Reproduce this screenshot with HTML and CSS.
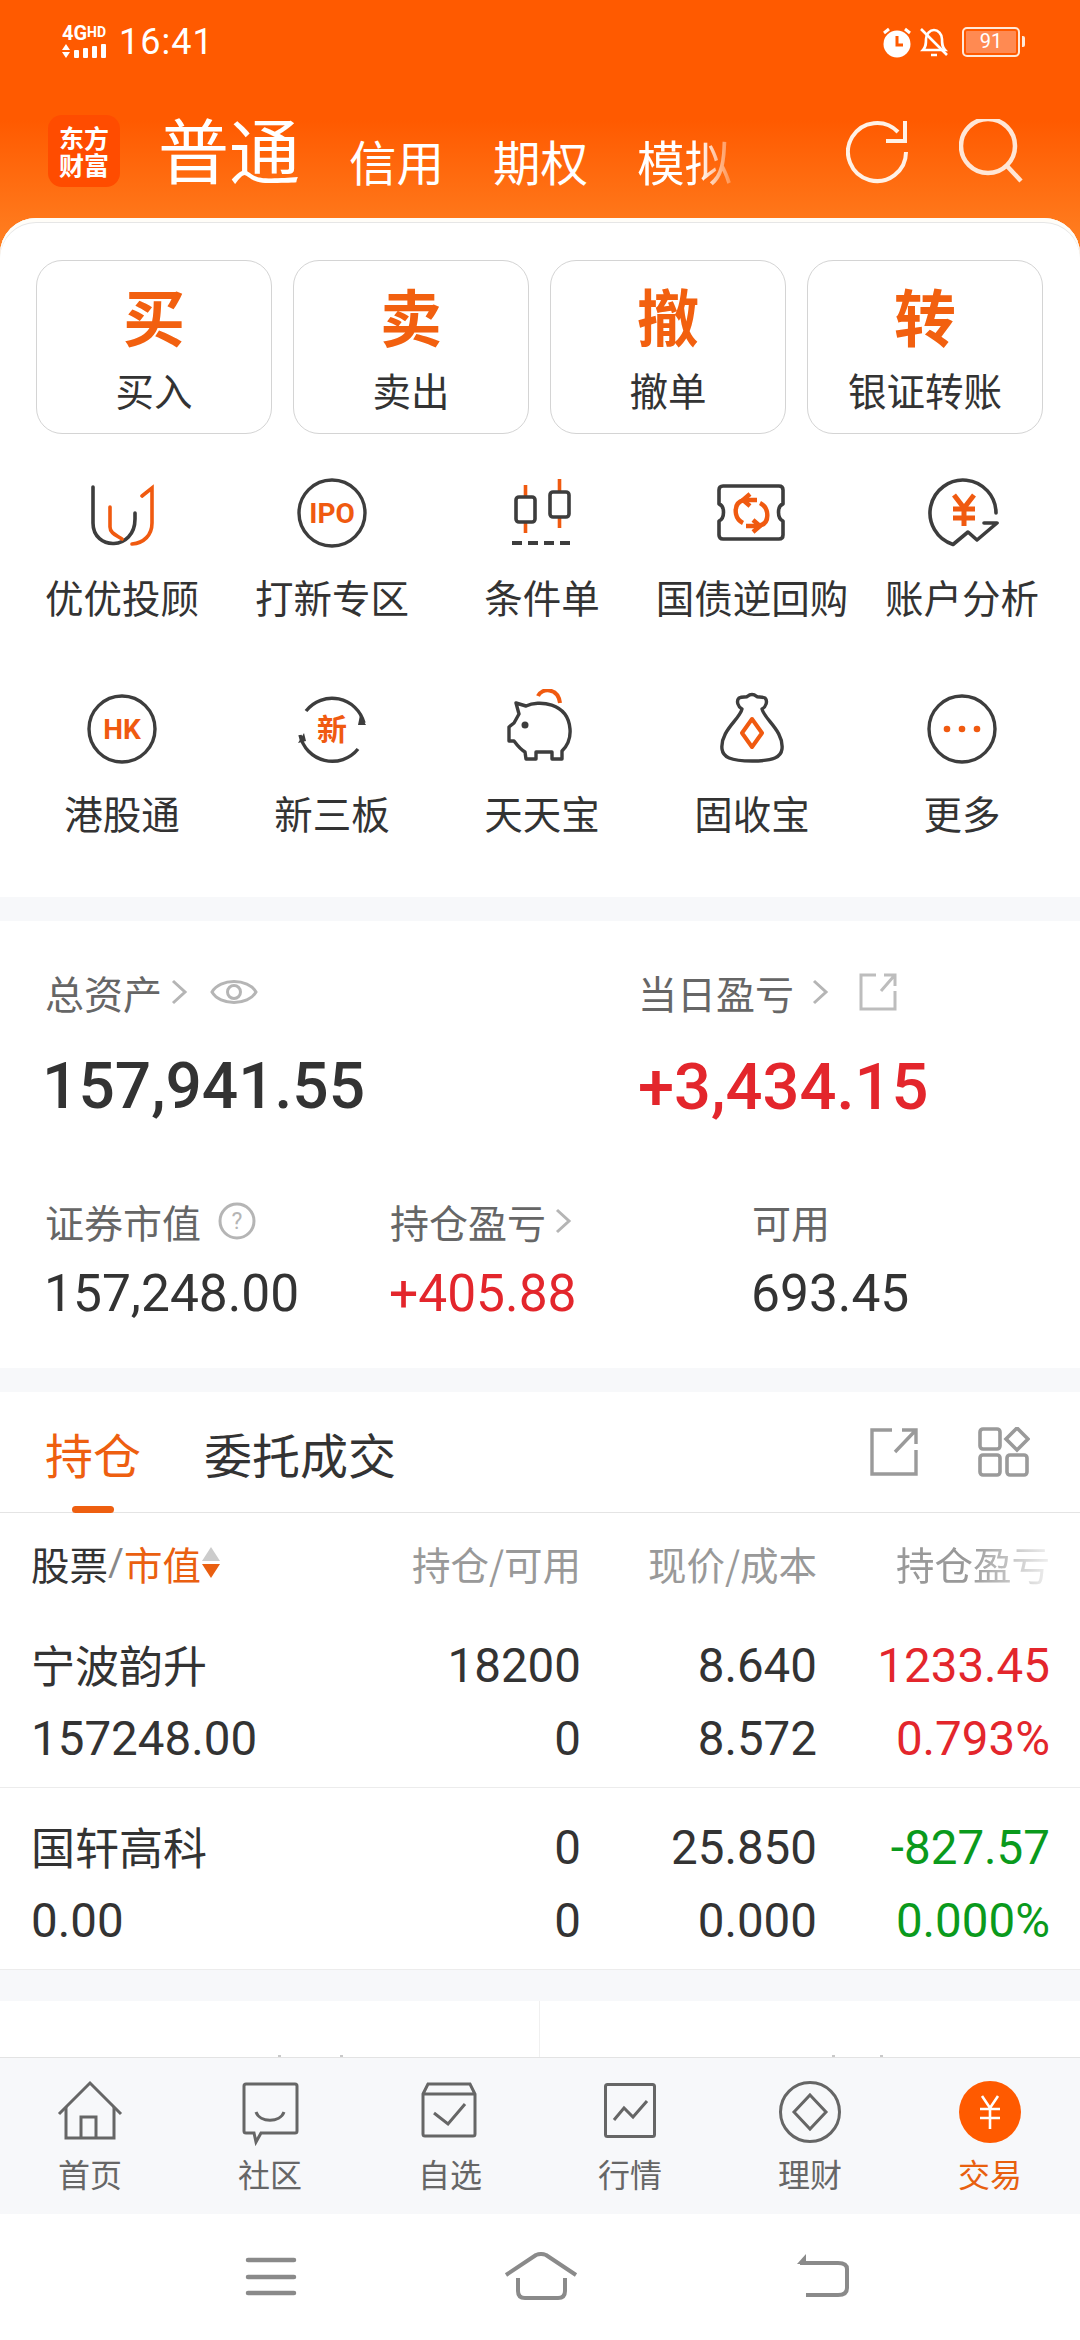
FILE: index.html
```html
<!DOCTYPE html>
<html lang="zh">
<head>
<meta charset="utf-8">
<title>交易</title>
<link rel="stylesheet" href="styles.css">
</head>
<body>
<div class="phone">
  <header class="head">
    <div class="status">
      <div class="status-left">
        <div class="net">
          <span class="net-text">4G<small>HD</small></span>
          <svg class="net-bars" width="48" height="16" viewBox="0 0 48 16"><path fill="#fff" d="M0 7 4 1l4 6zM0 9h8l-4 6zM12 8a1 1 0 0 1 1-1h3a1 1 0 0 1 1 1v6a1 1 0 0 1-1 1h-3a1 1 0 0 1-1-1zM21 6a1 1 0 0 1 1-1h3a1 1 0 0 1 1 1v8a1 1 0 0 1-1 1h-3a1 1 0 0 1-1-1zM30 4a1 1 0 0 1 1-1h3a1 1 0 0 1 1 1v10a1 1 0 0 1-1 1h-3a1 1 0 0 1-1-1zM39 2a1 1 0 0 1 1-1h3a1 1 0 0 1 1 1v12a1 1 0 0 1-1 1h-3a1 1 0 0 1-1-1z"/></svg>
        </div>
        <span class="time">16:41</span>
      </div>
      <div class="status-right">
        <svg width="30" height="32" viewBox="0 0 30 32"><circle cx="15" cy="18" r="13.5" fill="#fff"/><path d="M15 10v9h6" fill="none" stroke="#ff5a00" stroke-width="3"/><path d="M2 7l5-4M28 7l-5-4" stroke="#fff" stroke-width="3"/></svg>
        <svg width="28" height="32" viewBox="0 0 28 32"><path d="M3 24c3-3 3-6 3-11 0-5 4-9 8-9s8 4 8 9c0 5 0 8 3 11z" fill="none" stroke="#fff" stroke-width="2.6"/><path d="M11 29h6M1 3l26 26" stroke="#fff" stroke-width="2.6" fill="none"/></svg>
        <div class="battery"><div class="battery-fill"><span>91</span></div></div>
      </div>
    </div>
    <div class="headbar">
      <div class="logo"><span class="logo-text">东方财富</span></div>
      <nav class="acct-tabs">
        <span class="acct-main">普通</span>
        <span class="acct-sub">信用</span>
        <span class="acct-sub">期权</span>
        <span class="acct-sub acct-fade">模拟</span>
      </nav>
      <div class="head-actions">
        <svg width="66" height="66" viewBox="0 0 66 66" fill="none" stroke="#fff1e6" stroke-width="4"><path d="M60 33A29 29 0 1 1 52 13"/><path d="M59 2V22H40"/></svg>
        <svg width="66" height="66" viewBox="0 0 66 66" fill="none" stroke="#ffe6d6" stroke-width="4.5"><circle cx="29" cy="27" r="27"/><path d="M48 47 62 62"/></svg>
      </div>
    </div>
  </header>

  <section class="sheet">
    <div class="trade-btns">
      <div class="trade-btn"><b>买</b><span>买入</span></div>
      <div class="trade-btn"><b>卖</b><span>卖出</span></div>
      <div class="trade-btn"><b>撤</b><span>撤单</span></div>
      <div class="trade-btn"><b>转</b><span>银证转账</span></div>
    </div>
    <div class="tools">
      <div class="tool">
        <svg class="ico" viewBox="0 0 80 80" fill="none" stroke-width="3.6" stroke-linecap="round"><path stroke="#3d3d3d" d="M11 14V50C11 78 53 78 53 46V40"/><path stroke="#f05a10" d="M28 34V54C28 60 34 62 40 66M50 71C62 70 70 62 70 50V15L60 23"/></svg>
        <span>优优投顾</span>
      </div>
      <div class="tool">
        <svg class="ico" viewBox="0 0 80 80" fill="none"><circle cx="40" cy="40" r="33" stroke="#3d3d3d" stroke-width="3.4"/><text x="40" y="50" class="ico-text" font-size="28">IPO</text></svg>
        <span>打新专区</span>
      </div>
      <div class="tool">
        <svg class="ico" viewBox="0 0 80 80" fill="none" stroke-width="3.6"><path stroke="#f05a10" d="M23.500 12V24M23.500 49V60M57.500 6V19M57.500 44V55"/><rect x="14" y="24" width="19" height="25" rx="3" stroke="#3d3d3d"/><rect x="48" y="19" width="19" height="25" rx="3" stroke="#3d3d3d"/><path stroke="#3d3d3d" stroke-width="4" stroke-dasharray="10 6" d="M10 70H74"/></svg>
        <span>条件单</span>
      </div>
      <div class="tool">
        <svg class="ico" viewBox="0 0 80 80" fill="none" stroke-width="3.6"><path stroke="#3d3d3d" stroke-linejoin="round" d="M11 13H67Q71 13 71 17V31C65 33 65 45 71 48V62Q71 66 67 66H11Q7 66 7 62V48C13 45 13 33 7 31V17Q7 13 11 13Z"/><path stroke="#f05a10" stroke-width="4.400" d="M32 27C24 29 23 35 24 41 25 46 27 48 31 50M47 53C55 51 56 45 55 39 54 34 52 32 48 30"/><path stroke="#f05a10" stroke-width="4.400" stroke-linejoin="round" d="M38 21 31 27 38 33M41 59 48 53 41 47"/><path stroke="#f05a10" stroke-width="4.400" d="M32 27H45M47 53H34"/></svg>
        <span>国债逆回购</span>
      </div>
      <div class="tool">
        <svg class="ico" viewBox="0 0 80 80" fill="none" stroke-width="3.6" stroke-linejoin="round"><path stroke="#3d3d3d" stroke-linecap="round" d="M74 40A33 33 0 1 0 31 71.500L46 59 55 67 75 50H62"/><path stroke="#f05a10" stroke-width="5" d="M32 22 42 35 52 22M42 35V53M31 36H53M31 45H53"/></svg>
        <span>账户分析</span>
      </div>
      <div class="tool">
        <svg class="ico" viewBox="0 0 80 80" fill="none"><circle cx="40" cy="40" r="33" stroke="#3d3d3d" stroke-width="3.4"/><text x="40" y="50" class="ico-text" font-size="28">HK</text></svg>
        <span>港股通</span>
      </div>
      <div class="tool">
        <svg class="ico" viewBox="0 0 80 80" fill="none"><path stroke="#3d3d3d" stroke-width="3.4" d="M14 22A33 33 0 0 1 72 34M66 60A33 33 0 0 1 8 46"/><path fill="#3d3d3d" d="M68 26 74 36 66 36zM6 54 12 44 14 52z"/><text x="40" y="51" class="ico-cjk" font-size="30">新</text></svg>
        <span>新三板</span>
      </div>
      <div class="tool">
        <svg class="ico" viewBox="0 0 80 80" fill="none" stroke-linejoin="round"><path stroke="#f05a10" stroke-width="4" d="M36 7C39-1 56-2 58 14"/><path stroke="#3d3d3d" stroke-width="3.4" d="M14 14 24 17C36 11 66 13 68 40 69 52 64 58 60 62V70H50V63H34V70H24L23 63C18 60 15 56 12 52H7V38L12 34 17 25Z"/><circle cx="23" cy="36" r="3.500" fill="#3d3d3d"/></svg>
        <span>天天宝</span>
      </div>
      <div class="tool">
        <svg class="ico" viewBox="0 0 80 80" fill="none" stroke-linejoin="round"><path stroke="#3d3d3d" stroke-width="3.4" d="M30 20C26 18 24 12 27 9 31 7 34 9 36 7 38 5 42 5 44 7 46 9 49 7 53 9 56 12 54 18 50 20 52 30 72 42 70 60 69 68 62 72 40 72 18 72 11 68 10 60 8 42 28 30 30 20Z"/><path stroke="#f05a10" stroke-width="4" d="M40 30 50 44 40 58 30 44Z"/></svg>
        <span>固收宝</span>
      </div>
      <div class="tool">
        <svg class="ico" viewBox="0 0 80 80" fill="none"><circle cx="40" cy="40" r="33" stroke="#3d3d3d" stroke-width="3.4"/><circle cx="25" cy="40" r="3.300" fill="#f05a10"/><circle cx="40" cy="40" r="3.300" fill="#f05a10"/><circle cx="55" cy="40" r="3.300" fill="#f05a10"/></svg>
        <span>更多</span>
      </div>
    </div>
  </section>

  <div class="strip"></div>

  <section class="assets">
    <div class="assets-top">
      <div class="stat">
        <div class="stat-label">总资产
          <svg class="chev" width="18" height="34" viewBox="0 0 18 34" fill="none" stroke="#b5b5b5" stroke-width="3"><path d="M3 6 15 17 3 28"/></svg>
          <svg class="eye" width="48" height="34" viewBox="0 0 48 34" fill="none" stroke="#b5b5b5" stroke-width="3"><path d="M2 17C10 3 38 3 46 17 38 31 10 31 2 17Z"/><circle cx="24" cy="17" r="6.500"/></svg>
        </div>
        <div class="big">157,941.55</div>
      </div>
      <div class="stat">
        <div class="stat-label">当日盈亏
          <svg class="chev gap-chev" width="18" height="34" viewBox="0 0 18 34" fill="none" stroke="#b5b5b5" stroke-width="3"><path d="M3 6 15 17 3 28"/></svg>
          <svg class="share-small" width="38" height="38" viewBox="0 0 38 38" fill="none" stroke="#bdbdbd" stroke-width="3"><path d="M17 2H2V36H36V18M22 18 35 3M25 2H36V13"/></svg>
        </div>
        <div class="big big-gain">+3,434.15</div>
      </div>
    </div>
    <div class="assets-bottom">
      <div class="stat">
        <div class="stat-label">证券市值
          <svg class="help" width="38" height="38" viewBox="0 0 38 38" fill="none"><circle cx="19" cy="19" r="17" stroke="#b5b5b5" stroke-width="3"/><text x="19" y="27" class="help-text" font-size="23">?</text></svg>
        </div>
        <div class="mid">157,248.00</div>
      </div>
      <div class="stat">
        <div class="stat-label">持仓盈亏
          <svg class="chev" width="18" height="34" viewBox="0 0 18 34" fill="none" stroke="#b5b5b5" stroke-width="3"><path d="M3 6 15 17 3 28"/></svg>
        </div>
        <div class="mid red">+405.88</div>
      </div>
      <div class="stat">
        <div class="stat-label">可用</div>
        <div class="mid">693.45</div>
      </div>
    </div>
  </section>

  <div class="strip"></div>

  <section class="holdings">
    <div class="hold-tabs">
      <span class="hold-tab active">持仓</span>
      <span class="hold-tab">委托成交</span>
      <div class="hold-actions">
        <svg width="48" height="48" viewBox="0 0 48 48" fill="none" stroke="#9a9a9a" stroke-width="3.400"><path d="M22 2H2V46H46V22M25 24 45 3M32 2H46V16"/></svg>
        <svg width="52" height="50" viewBox="0 0 52 50" fill="none" stroke="#9a9a9a" stroke-width="3.600"><rect x="2" y="2" width="20" height="20" rx="3"/><rect x="2" y="28" width="20" height="20" rx="3"/><rect x="29" y="28" width="20" height="20" rx="3"/><path d="M39 1 50 12 39 23 28 12Z"/></svg>
      </div>
    </div>
    <div class="table-head">
      <div class="th-name">股票<i>/</i><em>市值</em><span class="sort"><u class="up"></u><u class="down"></u></span></div>
      <div class="th">持仓/可用</div>
      <div class="th">现价/成本</div>
      <div class="th th-fade">持仓盈亏</div>
    </div>
    <div class="hrow hrow-first">
      <div class="cell-name">宁波韵升</div><div class="num">18200</div><div class="num">8.640</div><div class="num red">1233.45</div>
      <div class="num-left">157248.00</div><div class="num">0</div><div class="num">8.572</div><div class="num red">0.793%</div>
    </div>
    <div class="hrow hrow-last">
      <div class="cell-name">国轩高科</div><div class="num">0</div><div class="num">25.850</div><div class="num green">-827.57</div>
      <div class="num-left">0.00</div><div class="num">0</div><div class="num">0.000</div><div class="num green">0.000%</div>
    </div>
  </section>

  <div class="strip strip-last"></div>

  <section class="promo">
    <div class="promo-cell"><s class="tick t1"></s><s class="tick t2"></s></div>
    <div class="promo-cell promo-right"><s class="tick t3"></s><s class="tick t4"></s></div>
  </section>

  <nav class="tabbar">
    <div class="tab-item">
      <svg class="tab-ico" viewBox="0 0 80 80" fill="none" stroke="#666" stroke-width="3"><path d="M9 42 40 11 71 42"/><path d="M16 35V66H64V35M31 66V45H46V66"/></svg>
      <span>首页</span>
    </div>
    <div class="tab-item">
      <svg class="tab-ico" viewBox="0 0 80 80" fill="none" stroke="#666" stroke-width="3"><path d="M16 12H65Q67 12 67 14V59Q67 61 65 61H31L26 70 24 61H16Q14 61 14 59V14Q14 12 16 12Z"/><path d="M26 40C30 51 50 51 54 40"/></svg>
      <span>社区</span>
    </div>
    <div class="tab-item">
      <svg class="tab-ico" viewBox="0 0 80 80" fill="none" stroke="#666" stroke-width="3"><path d="M13 22 18 12H60L65 22V62Q65 64 63 64H15Q13 64 13 62ZM13 22H65"/><path d="M24 41 38 52 55 32"/></svg>
      <span>自选</span>
    </div>
    <div class="tab-item">
      <svg class="tab-ico" viewBox="0 0 80 80" fill="none" stroke="#666" stroke-width="3"><rect x="15.500" y="12.500" width="49" height="52" rx="2"/><path d="M24 48 34 36 43 45 57 29"/></svg>
      <span>行情</span>
    </div>
    <div class="tab-item">
      <svg class="tab-ico" viewBox="0 0 80 80" fill="none" stroke="#666" stroke-width="3"><circle cx="40" cy="40" r="29.500"/><path d="M40 23 56 40 40 57 24 40Z"/></svg>
      <span>理财</span>
    </div>
    <div class="tab-item tab-active">
      <svg class="tab-ico" viewBox="0 0 80 80" fill="none"><circle cx="40" cy="40" r="31" fill="#ff5a00"/><path d="M32 24 40 36 48 24M40 36V57M30 37H50M30 46H50" stroke="#fff" stroke-width="2.600"/></svg>
      <span>交易</span>
    </div>
  </nav>

  <footer class="sysnav">
    <svg width="60" height="50" viewBox="0 0 60 50" fill="none" stroke="#8a8a8a" stroke-width="4.500" stroke-linecap="round"><path d="M7 8H53M7 25H53M7 41H53"/></svg>
    <svg width="80" height="50" viewBox="0 0 80 50" fill="none" stroke="#8a8a8a" stroke-width="4" stroke-linejoin="round"><path d="M5 23 35 3Q40 1 45 3L75 23"/><path d="M17 26V39Q17 46 24 46H57Q64 46 64 39V26"/></svg>
    <svg width="60" height="50" viewBox="0 0 60 50" fill="none" stroke="#8a8a8a" stroke-width="4" stroke-linejoin="round"><path d="M6 11H44Q53 11 53 17V36Q53 43 44 43H12"/><path fill="#8a8a8a" stroke="none" d="M12 2V12H3Z"/></svg>
  </footer>
</div>
</body>
</html>
```

FILE: styles.css
```css
* { box-sizing: border-box; }
html, body { margin: 0; padding: 0; background: #fff; }
body { font-family: "Noto Sans CJK SC", "Roboto", sans-serif; color: #333; }
.phone { width: 1080px; height: 2340px; display: flex; flex-direction: column; overflow: hidden; background: #fff; }

/* header */
.head { height: 255px; flex: none; color: #fff; background: linear-gradient(180deg, #ff5a00 0, #ff5a00 120px, #ff8224 255px); }
.status { height: 84px; display: flex; justify-content: space-between; align-items: center; padding: 0 60px 0 62px; }
.status-left { display: flex; align-items: center; gap: 9px; }
.net { display: flex; flex-direction: column; width: 48px; gap: 2px; }
.net-text { font: 700 20px/15px "Roboto", sans-serif; white-space: nowrap; }
.net-text small { font-size: 14px; vertical-align: 3px; margin-left: 0; }
.net-bars { display: block; }
.time { font: 400 36px/40px "Roboto", sans-serif; letter-spacing: 1px; }
.status-right { display: flex; align-items: center; gap: 8px; }
.battery { width: 58px; height: 30px; margin-left: 6px; border: 2.500px solid #ffe9d9; border-radius: 5px; padding: 2px; position: relative; }
.battery::after { content: ""; position: absolute; right: -7px; top: 7px; width: 3px; height: 11px; background: #ffe9d9; border-radius: 0 2px 2px 0; }
.battery-fill { height: 100%; background: #ff8a52; text-align: center; border-radius: 1px; }
.battery-fill span { font: 400 20px/21px "Roboto", sans-serif; display: block; }
.headbar { display: flex; align-items: flex-end; margin-top: 31px; padding: 0 55px 0 48px; height: 72px; }
.logo { width: 72px; height: 72px; background: #ff4c00; border-radius: 14px; display: flex; align-items: center; justify-content: center; flex: none; }
.logo-text { width: 50px; font-size: 25px; font-weight: 700; line-height: 27px; text-align: center; }
.acct-tabs { display: flex; align-items: flex-end; gap: 49px; margin-left: 38px; }
.acct-main { font-size: 71px; line-height: 72px; margin-bottom: 4px; }
.acct-sub { font-size: 47.500px; line-height: 52px; }
.acct-fade { -webkit-mask-image: linear-gradient(90deg, #000 65%, rgba(0,0,0,.25) 100%); mask-image: linear-gradient(90deg, #000 65%, rgba(0,0,0,.25) 100%); }
.head-actions { margin-left: auto; display: flex; align-items: center; gap: 47px; height: 72px; padding-top: 2px; }

/* sheet */
.sheet { margin-top: -37px; position: relative; background: #fff; border-radius: 36px 36px 0 0; padding-top: 42px; height: 679px; flex: none; box-shadow: inset 0 4px 0 #fffdf8, inset 0 5px 0 #e6e6e6; }
.trade-btns { display: grid; grid-template-columns: repeat(4, 236px); gap: 21px; padding-left: 36px; }
.trade-btn { height: 174px; border: 1.500px solid #d4d4d4; border-radius: 26px; display: flex; flex-direction: column; align-items: center; }
.trade-btn b { font-size: 62px; line-height: 70px; margin-top: 19px; color: #f2600f; font-weight: 700; }
.trade-btn span { font-size: 38.500px; line-height: 46px; margin-top: 16px; color: #333; }
.tools { display: grid; grid-template-columns: repeat(5, 210px); grid-template-rows: 216px 208px; padding: 39px 0 0 17px; }
.tool { display: flex; flex-direction: column; align-items: center; gap: 21px; }
.tool span { font-size: 38.500px; line-height: 44px; color: #333; white-space: nowrap; }
.ico { width: 80px; height: 80px; display: block; }
.ico-text { fill: #f05a10; font-family: "Roboto", sans-serif; font-weight: 700; text-anchor: middle; }
.ico-cjk { fill: #f05a10; font-family: "Noto Sans CJK SC", sans-serif; font-weight: 700; text-anchor: middle; }
.strip { height: 24px; background: #f7f8fa; flex: none; }

/* assets */
.assets { height: 447px; flex: none; padding: 49px 0 0 45px; }
.assets-top { display: grid; grid-template-columns: 593px 1fr; }
.assets-bottom { display: grid; grid-template-columns: 345px 362px 1fr; margin-top: 74px; }
.stat-label { font-size: 39px; line-height: 44px; height: 44px; color: #666; display: flex; align-items: center; white-space: nowrap; }
.chev { margin-left: 8px; }
.gap-chev { margin-left: 17px; }
.eye { margin-left: 22px; }
.share-small { margin-left: 30px; }
.help { margin-left: 17px; }
.help-text { fill: #b5b5b5; font-family: "Roboto", sans-serif; text-anchor: middle; }
.big { font: 500 64px/76px "Roboto", sans-serif; margin: 35px 0 0 -3px; color: #333; }
.big-gain { font-size: 65px; margin-left: 0; color: #e3262c; }
.mid { font: 400 51.500px/60px "Roboto", sans-serif; margin: 21px 0 0 -1px; color: #333; }
.red { color: #e3262c !important; }
.green { color: #0a9a1c !important; }

/* holdings */
.holdings { flex: none; }
.hold-tabs { height: 121px; border-bottom: 1.500px solid #e4e4e4; display: flex; align-items: center; gap: 63px; padding: 0 50px 0 45px; position: relative; }
.hold-tab { font-size: 48px; line-height: 60px; color: #333; position: relative; margin-top: 2px; }
.hold-tab.active { color: #ee5f10; }
.hold-tab.active::after { content: ""; position: absolute; left: 27px; width: 42px; height: 7px; top: 83px; background: #ee5f10; border-radius: 4px; }
.hold-actions { margin-left: auto; display: flex; gap: 60px; align-items: center; }
.table-head, .hrow { display: grid; grid-template-columns: 1fr 190px 236px 233px; padding: 0 30px 0 31px; }
.table-head { height: 99px; align-items: center; font-size: 38.500px; }
.th-name { color: #333; display: flex; align-items: center; }
.th-name i { font-style: normal; color: #888; font-family: "Roboto", sans-serif; }
.th-name em { font-style: normal; color: #ea5f10; }
.sort { display: inline-flex; flex-direction: column; gap: 3px; margin-left: 1px; }
.sort u { display: block; width: 0; height: 0; border-left: 9px solid transparent; border-right: 9px solid transparent; }
.sort .up { border-bottom: 14px solid #ccc; }
.sort .down { border-top: 14px solid #ea5f10; }
.th { text-align: right; color: #999; white-space: nowrap; }
.th-fade { -webkit-mask-image: linear-gradient(90deg, #000 65%, rgba(0,0,0,.15) 100%); mask-image: linear-gradient(90deg, #000 65%, rgba(0,0,0,.15) 100%); }
.hrow { grid-auto-rows: 72.500px; align-items: center; }
.hrow-first { padding-top: 16px; padding-bottom: 14px; border-bottom: 1.500px solid #ececec; }
.hrow-last { padding-top: 22px; padding-bottom: 14px; }
.cell-name { font-size: 44px; color: #333; white-space: nowrap; }
.num, .num-left { font: 400 47.500px/60px "Roboto", sans-serif; color: #333; padding-top: 4px; }
.num { text-align: right; }
.strip-last { height: 32px; border-top: 1.500px solid #ececec; }

/* promo */
.promo { flex: 1; display: grid; grid-template-columns: 539px 1fr; min-height: 0; }
.promo-cell { position: relative; }
.promo-right { border-left: 1.500px solid #f0f0f0; }
.tick { position: absolute; bottom: 0; width: 3px; height: 2px; background: #c9c9c9; }
.t1 { left: 278px; } .t2 { left: 340px; } .t3 { left: 292px; } .t4 { left: 340px; }

/* tab bar */
.tabbar { height: 157px; flex: none; background: #f7f8fa; border-top: 1.500px solid #e3e3e3; display: grid; grid-template-columns: repeat(6, 180px); padding-top: 14px; }
.tab-item { display: flex; flex-direction: column; align-items: center; gap: 1px; }
.tab-item span { font-size: 32px; line-height: 40px; color: #666; }
.tab-ico { width: 80px; height: 80px; display: block; }
.tab-active span { color: #e8600f; }

/* system navigation */
.sysnav { height: 126px; flex: none; background: #fff; display: flex; align-items: center; padding-left: 241px; gap: 200px; }
.sysnav svg:last-child { margin-left: 13px; }
```
